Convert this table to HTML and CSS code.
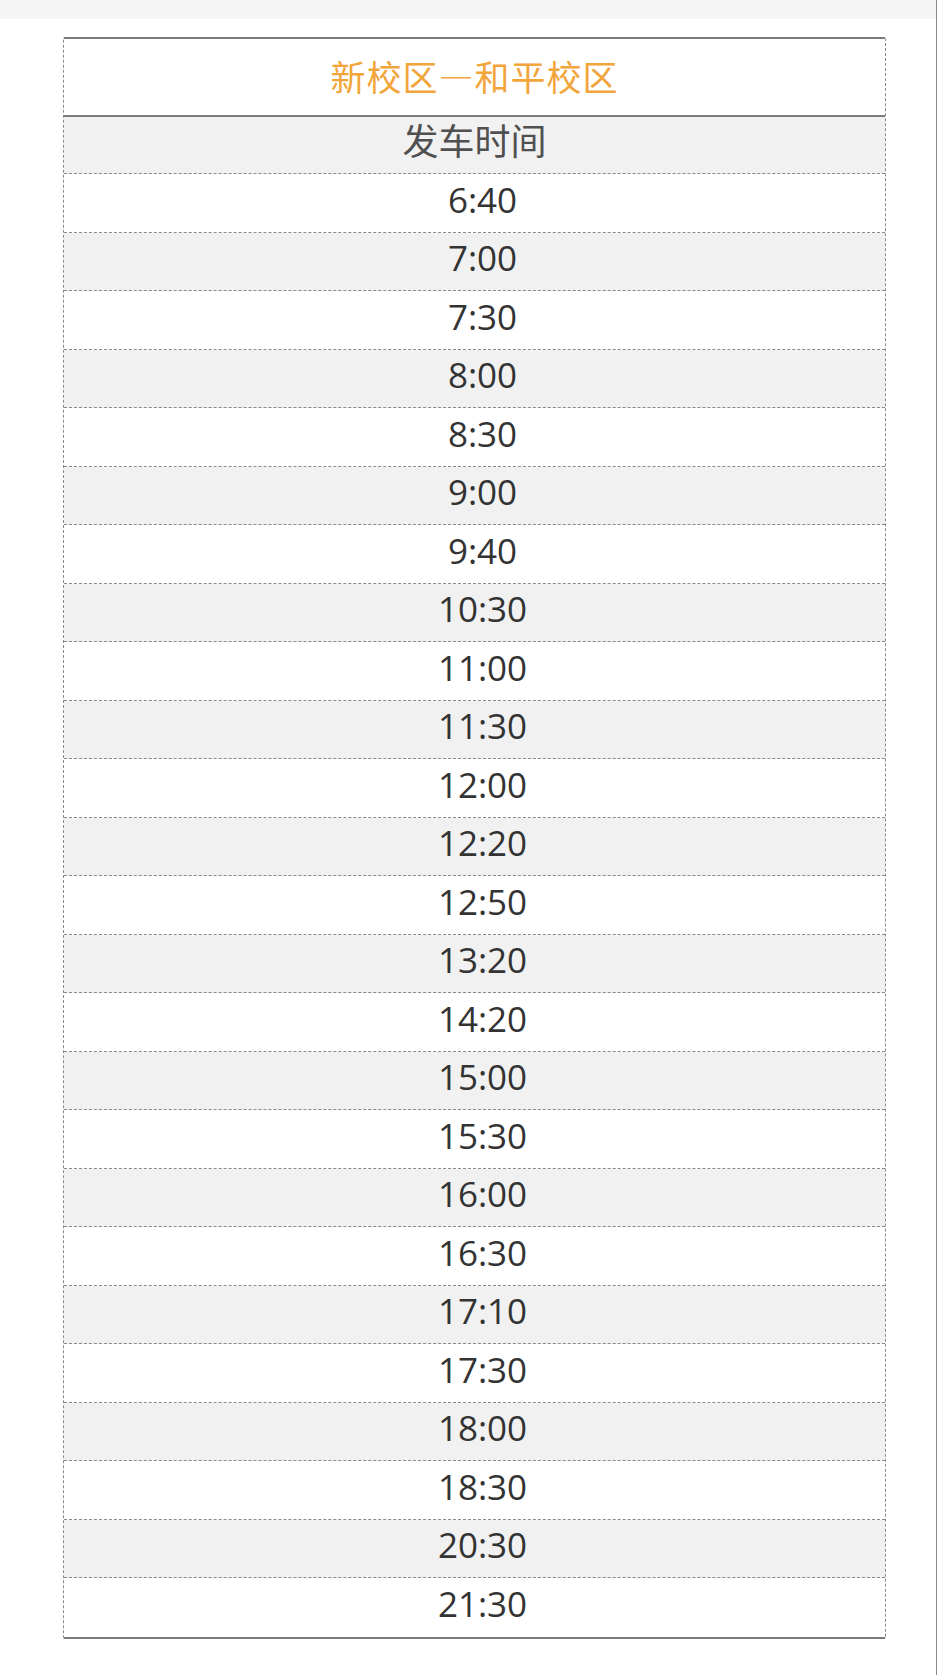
FILE: index.html
```html
<!DOCTYPE html>
<html lang="zh-CN">
<head>
  <meta charset="UTF-8">
  <title>新校区—和平校区 发车时间</title>
  <meta name="viewport" content="width=device-width, initial-scale=1.0">
  <link rel="stylesheet" href="styles.css">
</head>
<body>
  <div class="page">
    <div class="topbar"></div>

    <div class="schedule">
      <div class="title">新校区—和平校区</div>
      <div class="row head">发车时间</div>
      <div class="row">6:40</div>
      <div class="row">7:00</div>
      <div class="row">7:30</div>
      <div class="row">8:00</div>
      <div class="row">8:30</div>
      <div class="row">9:00</div>
      <div class="row">9:40</div>
      <div class="row">10:30</div>
      <div class="row">11:00</div>
      <div class="row">11:30</div>
      <div class="row">12:00</div>
      <div class="row">12:20</div>
      <div class="row">12:50</div>
      <div class="row">13:20</div>
      <div class="row">14:20</div>
      <div class="row">15:00</div>
      <div class="row">15:30</div>
      <div class="row">16:00</div>
      <div class="row">16:30</div>
      <div class="row">17:10</div>
      <div class="row">17:30</div>
      <div class="row">18:00</div>
      <div class="row">18:30</div>
      <div class="row">20:30</div>
      <div class="row">21:30</div>
    </div>
  </div>
</body>
</html>
```

FILE: styles.css
```css
* {
  box-sizing: border-box;
}

body {
  margin: 0;
  padding: 0;
  background: #fff;
  font-family: 'Open Sans', 'Noto Sans CJK SC', sans-serif;
  color: #333;
}

.page {
  min-height: 1675px;
  border-right: 1px solid #8c8c8c;
}

.topbar {
  height: 19px;
  background: #f5f5f5;
}

.schedule {
  width: 823px;
  margin: 18px 0 0 63px;
  border-top: 2px solid #7a7a7a;
  border-bottom: 2px solid #7a7a7a;
  border-left: 1px dashed #8a8a8a;
  border-right: 1px dashed #8a8a8a;
  border-radius: 2px;
}

.title {
  height: 78px;
  display: flex;
  align-items: center;
  justify-content: center;
  border-bottom: 2px solid #7a7a7a;
  font-family: 'Noto Sans CJK SC', sans-serif;
  font-size: 35px;
  letter-spacing: 1px;
  color: #f2a53a;
  padding-bottom: 4px;
}

.row {
  height: 58.5px;
  display: flex;
  align-items: center;
  justify-content: center;
  border-bottom: 1px dashed #8a8a8a;
  font-size: 35px;
  font-weight: 500;
  padding: 0 0 7px 16px;
}

.row:nth-child(even) {
  background: #f1f1f1;
}

.row:last-child {
  border-bottom: none;
}

.head {
  height: 57px;
  font-family: 'Noto Sans CJK SC', sans-serif;
  font-size: 36px;
  font-weight: 400;
  color: #505050;
  padding: 0 0 12px 0;
}
```
